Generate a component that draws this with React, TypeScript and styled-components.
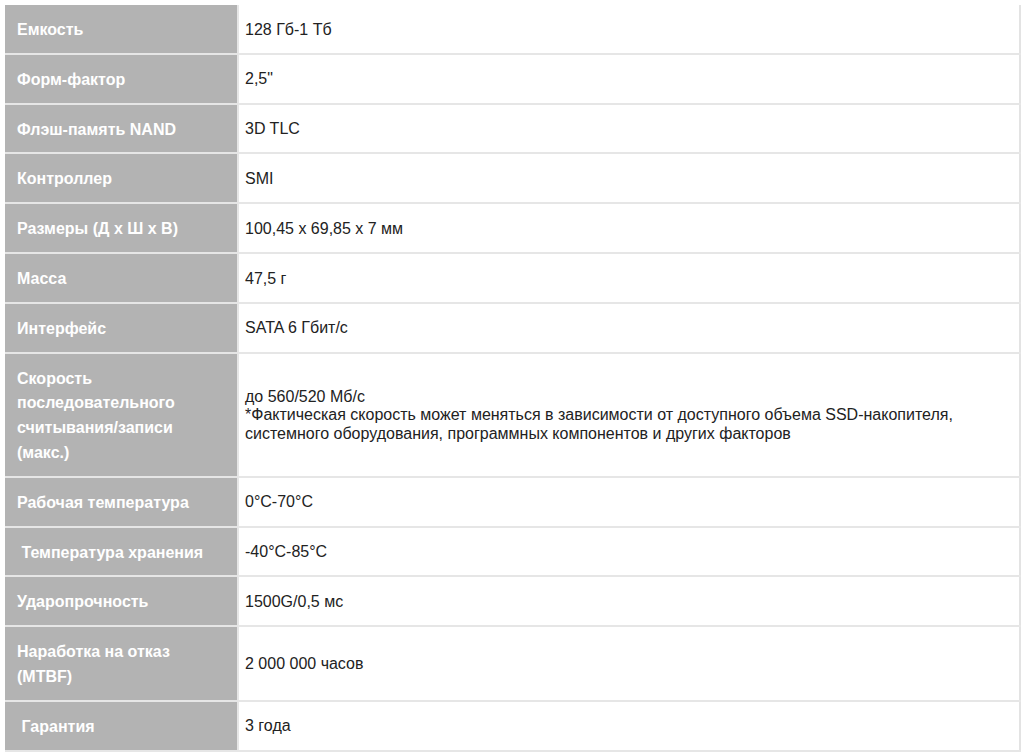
import React from "react";
import styled, { createGlobalStyle } from "styled-components";

const Global = createGlobalStyle`
  html, body { margin: 0; padding: 0; background: #ffffff; }
  body { font-family: "Liberation Sans", Arial, sans-serif; }
`;

const Page = styled.div`
  padding: 5px 3px 0 5px;
`;

const Table = styled.table`
  width: 1016px;
  border-collapse: collapse;
  table-layout: fixed;
  border-right: 2px solid #e3e3e3;
`;

const Row = styled.tr`
  border-bottom: 2px solid #e6e6e6;
`;

const Label = styled.th`
  width: 233px;
  box-sizing: border-box;
  background: #b3b3b3;
  color: #ffffff;
  font-weight: bold;
  font-size: 16px;
  line-height: 24.8px;
  text-align: left;
  vertical-align: middle;
  padding: 13px 12px 10px 12px;
  border-right: 2px solid #e6e6e6;
`;

const Value = styled.td`
  background: #ffffff;
  color: #222222;
  font-size: 16px;
  line-height: 18.4px;
  vertical-align: middle;
  padding: 2px 8px 0 6px;
`;

const rows: { label: string; value: React.ReactNode }[] = [
  { label: "Емкость", value: "128 Гб-1 Тб" },
  { label: "Форм-фактор", value: "2,5\"" },
  { label: "Флэш-память NAND", value: "3D TLC" },
  { label: "Контроллер", value: "SMI" },
  { label: "Размеры (Д х Ш х В)", value: "100,45 x 69,85 x 7 мм" },
  { label: "Масса", value: "47,5 г" },
  { label: "Интерфейс", value: "SATA 6 Гбит/с" },
  {
    label: "Скорость последовательного считывания/записи (макс.)",
    value: (
      <>
        до 560/520 Мб/с
        <br />
        *Фактическая скорость может меняться в зависимости от доступного объема SSD-накопителя,
        системного оборудования, программных компонентов и других факторов
      </>
    ),
  },
  { label: "Рабочая температура", value: "0°C-70°C" },
  { label: "\u00a0Температура хранения", value: "-40°C-85°C" },
  { label: "Ударопрочность", value: "1500G/0,5 мс" },
  { label: "Наработка на отказ (MTBF)", value: "2 000 000 часов" },
  { label: "\u00a0Гарантия", value: "3 года" },
];

export default function App() {
  return (
    <>
      <Global />
      <Page>
        <Table>
          <tbody>
            {rows.map((r, i) => (
              <Row key={i}>
                <Label>{r.label}</Label>
                <Value>{r.value}</Value>
              </Row>
            ))}
          </tbody>
        </Table>
      </Page>
    </>
  );
}
